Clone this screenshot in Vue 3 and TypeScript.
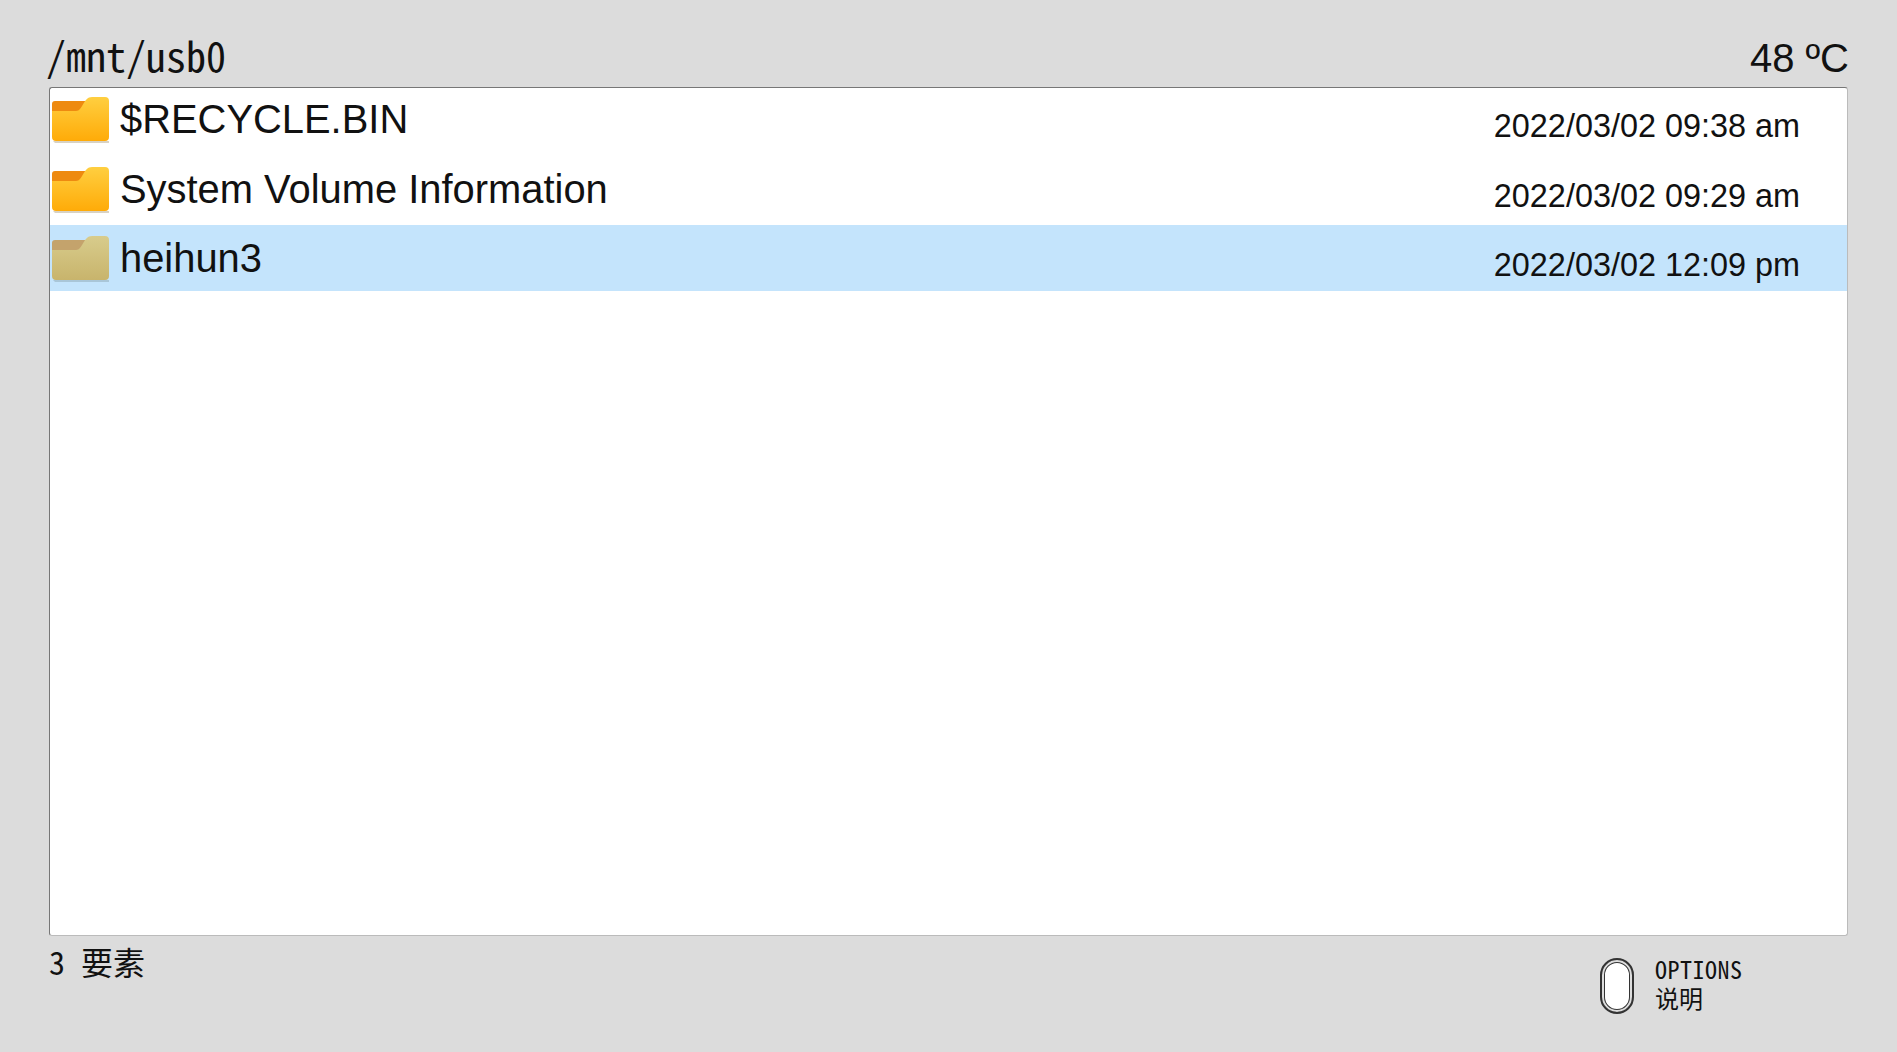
<template>
  <div class="screen">
    <header class="top-bar">
      <span class="path">/mnt/usb0</span>
      <span class="temp">48 ºC</span>
    </header>

    <main class="file-list">
      <div
        v-for="file in files"
        :key="file.name"
        class="file-row"
        :class="{ selected: file.selected }"
      >
        <svg class="folder" viewBox="0 0 60 48" width="60" height="48">
          <defs>
            <linearGradient :id="`front-${file.name.length}`" x1="0" y1="0" x2="0" y2="1">
              <stop offset="0" :stop-color="file.selected ? '#d8cc8c' : '#ffcf40'" />
              <stop offset="1" :stop-color="file.selected ? '#c8b46c' : '#ffab08'" />
            </linearGradient>
          </defs>
          <path d="M3 46H59V48H5Z" :fill="file.selected ? '#a9c6d8' : '#d8d2c4'" />
          <path
            d="M2 9a3 3 0 0 1 3-3H38L28 17H2Z"
            :fill="file.selected ? '#c4a36c' : '#ee8a10'"
          />
          <path
            d="M2 16H26C33 16 33 2 42 2H55a4 4 0 0 1 4 4V42a4 4 0 0 1-4 4H6a4 4 0 0 1-4-4Z"
            :fill="`url(#front-${file.name.length})`"
          />
        </svg>
        <span class="file-name">{{ file.name }}</span>
        <span class="file-date">{{ file.date }}</span>
      </div>
    </main>

    <footer class="bottom-bar">
      <span class="count">3 要素</span>
      <div class="hint">
        <span class="pill"></span>
        <div class="hint-text">
          <div class="hint-key">OPTIONS</div>
          <div>说明</div>
        </div>
      </div>
    </footer>
  </div>
</template>

<script setup lang="ts">
interface FileEntry {
  name: string
  date: string
  selected?: boolean
}

const files: FileEntry[] = [
  { name: '$RECYCLE.BIN', date: '2022/03/02 09:38 am' },
  { name: 'System Volume Information', date: '2022/03/02 09:29 am' },
  { name: 'heihun3', date: '2022/03/02 12:09 pm', selected: true }
]
</script>

<style>
html,
body {
  margin: 0;
  background: #dcdcdc;
}
</style>

<style scoped>
.screen {
  width: 1897px;
  height: 1052px;
  box-sizing: border-box;
  padding: 0 49px;
  background: #dcdcdc;
  color: #111;
  display: flex;
  flex-direction: column;
  overflow: hidden;
  font-family: "Liberation Sans", sans-serif;
}

.top-bar {
  height: 87px;
  flex: none;
  display: flex;
  justify-content: space-between;
  align-items: flex-end;
}

.path {
  margin-left: -3px;
  margin-bottom: 12px;
  font-family: "Noto Sans Mono CJK SC", "Liberation Mono", monospace;
  font-size: 40px;
  line-height: 40px;
}

.temp {
  margin-right: -1px;
  font-size: 40px;
  line-height: 46px;
  margin-bottom: 6px;
}

.file-list {
  height: 849px;
  flex: none;
  box-sizing: border-box;
  background: #fff;
  border: 1px solid #bbb;
  border-top-color: #777;
  border-left-color: #777;
  border-radius: 3px;
  display: flex;
  flex-direction: column;
  gap: 3.3px;
}

.file-row {
  height: 66px;
  flex: none;
  display: flex;
  align-items: flex-start;
}

.file-row:first-child {
  margin-top: -1.6px;
}

.file-row.selected {
  background: #c4e4fc;
}

.folder {
  flex: none;
  margin: 9px 10px 0 0;
}

.file-name {
  font-size: 39.9px;
  line-height: 46px;
  margin-top: 10px;
}

.file-date {
  margin-left: auto;
  margin-right: 47px;
  margin-top: 19px;
  font-size: 32.4px;
  line-height: 42px;
}

.bottom-bar {
  flex: 1;
  display: flex;
  justify-content: space-between;
  align-items: flex-start;
  font-family: "Noto Sans Mono CJK SC", "Liberation Mono", "Noto Sans CJK SC", monospace;
}

.count {
  font-size: 32px;
  line-height: 40px;
  margin-top: 5px;
}

.hint {
  width: 248px;
  display: flex;
  align-items: flex-start;
  gap: 21px;
  margin-top: 22px;
}

.pill {
  width: 34px;
  height: 56px;
  box-sizing: border-box;
  flex: none;
  background: #fff;
  border: 2px solid #333;
  border-radius: 17px;
  box-shadow: inset 0 0 0 2px #ddd, inset 0 0 0 3px #333;
}

.hint-text {
  font-size: 24px;
  line-height: 29px;
  margin-top: -4px;
}

.hint-key {
  letter-spacing: 0.5px;
}
</style>
